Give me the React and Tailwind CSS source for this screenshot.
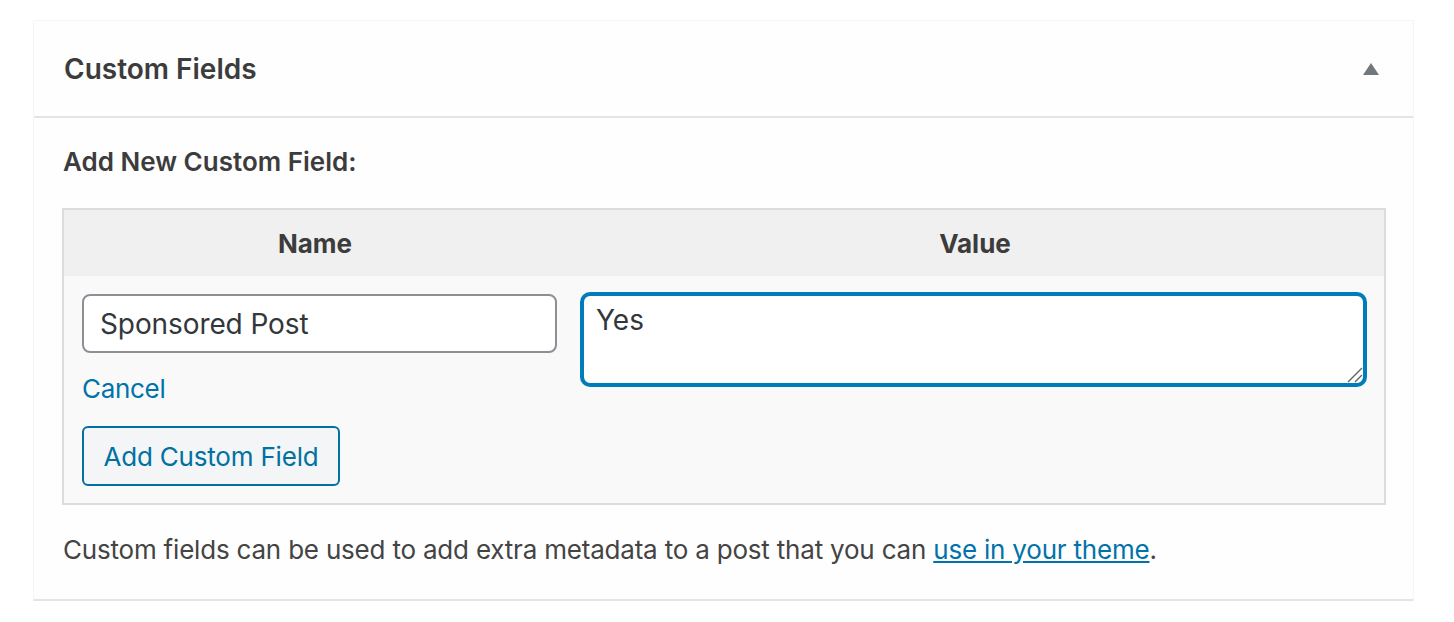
export default function App() {
  return (
    <div
      className="min-h-screen bg-white pt-[20px] pl-[33px] text-[#444]"
      style={{ fontFamily: 'Inter, "Noto Sans", "Liberation Sans", sans-serif' }}
    >
      <div className="w-[1381px] bg-[#fefefe] border border-[#f6f6f6] border-b-2 border-b-[#e2e4e7]">

        <div className="h-[97px] flex items-center justify-between pl-[30px] pr-[34px] border-b-2 border-[#e2e4e7]">
          <h2 className="text-[28px] font-semibold text-[#3c3c3c] leading-none">Custom Fields</h2>
          <svg width="16" height="12" viewBox="0 0 16 12" className="mt-[1px]">
            <polygon points="8,0 16,12 0,12" fill="#72777c" />
          </svg>
        </div>

        <div className="pl-[28px] pr-[27px] pt-[26px] pb-[31px]">

          <p className="text-[26px] leading-[36px] font-semibold text-[#3c3c3c] pl-[1px]">
            Add New Custom Field:
          </p>

          <div className="mt-[28px] border-2 border-[#dcdcde] bg-[#f9f9f9]">

            <div className="h-[66px] flex bg-[#f0f0f0] text-[26px] font-bold text-[#3c3c3c]">
              <div className="w-[502px] flex items-center justify-center">Name</div>
              <div className="flex-1 flex items-center justify-center">Value</div>
            </div>

            <div className="flex">
              <div className="w-[502px] pl-[18px] pt-[18px] pb-[17px]">
                <input
                  type="text"
                  defaultValue="Sponsored Post"
                  className="w-[475px] h-[59px] border-2 border-[#8c8f94] rounded-[8px] bg-white px-[16px] text-[28px] tracking-[-0.1px] text-[#32373c] outline-none"
                />
                <div className="mt-[18px] text-[26px] leading-[36px] tracking-[-0.3px]">
                  <a href="#" className="text-[#0073aa]">Cancel</a>
                </div>
                <button className="mt-[19px] h-[60px] w-[258px] border-2 border-[#0071a1] rounded-[6px] bg-[#f3f5f6] text-[26px] tracking-[-0.2px] text-[#0071a1]">
                  Add Custom Field
                </button>
              </div>

              <div className="flex-1 pl-[16px] pr-[19px] pt-[18px]">
                <div className="relative">
                  <textarea
                    defaultValue="Yes"
                    className="block w-full h-[91px] resize-none border-2 border-[#007cba] rounded-[8px] shadow-[0_0_0_2px_#007cba] bg-white px-[12px] py-[4px] text-[28px] leading-[40px] text-[#32373c] outline-none"
                  />
                  <svg
                    width="16"
                    height="16"
                    viewBox="0 0 16 16"
                    className="absolute right-[2px] bottom-[2px] pointer-events-none"
                  >
                    <line x1="1" y1="15" x2="15" y2="1" stroke="#666" strokeWidth="1.5" />
                    <line x1="8" y1="15" x2="15" y2="8" stroke="#666" strokeWidth="1.5" />
                  </svg>
                </div>
              </div>
            </div>

          </div>

          <p className="mt-[27px] text-[26px] leading-[36px] tracking-[-0.2px] pl-[1px]">
            Custom fields can be used to add extra metadata to a post that you can{' '}
            <a href="#" className="text-[#0073aa] underline">use in your theme</a>.
          </p>

        </div>
      </div>
    </div>
  )
}
